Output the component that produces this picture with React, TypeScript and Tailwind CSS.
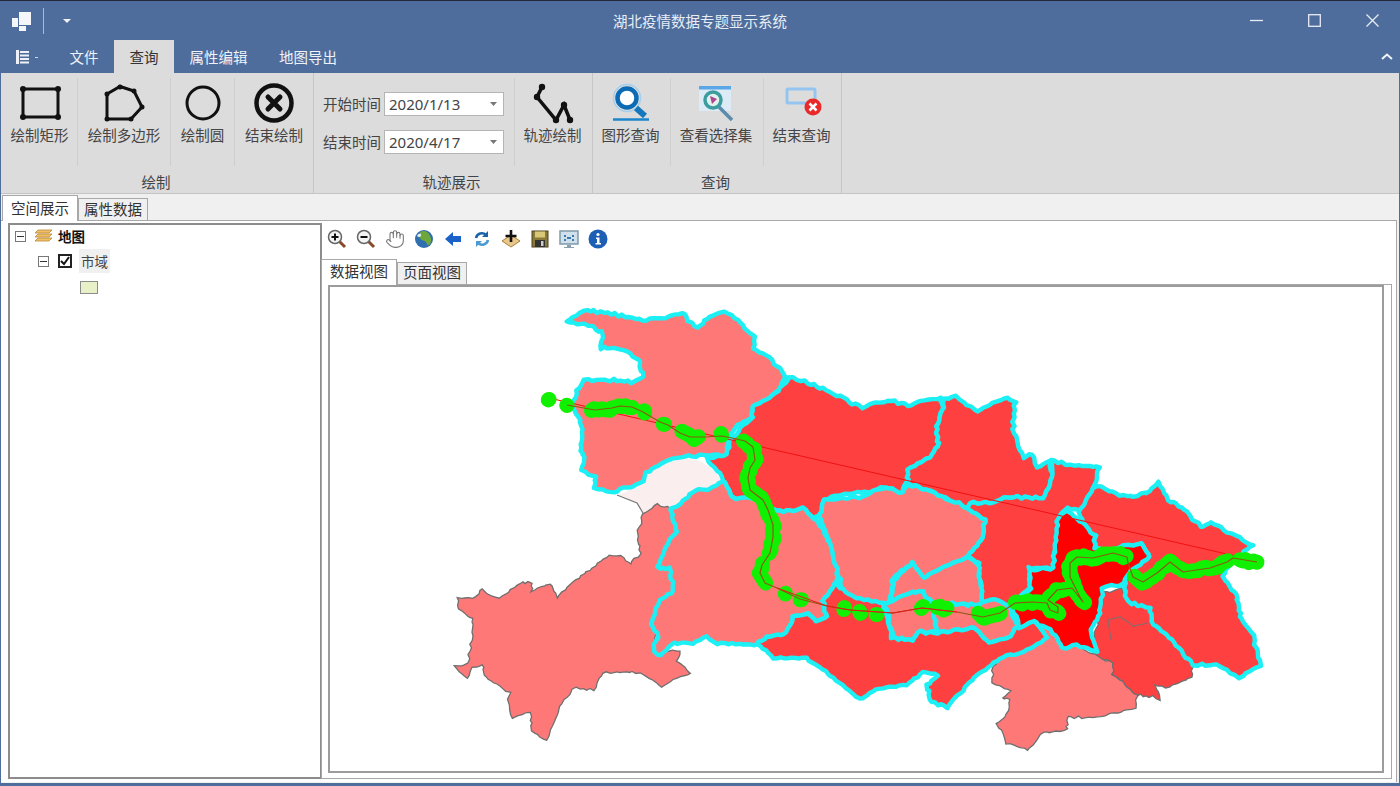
import { Hand } from "lucide-react";

type Pt = number[];

const SHIYAN: Pt[] = [[567,322],[583,310],[607,313],[643,320],[670,317],[682,312],[688,320],[697,327],[710,317],[725,312],[740,323],[755,337],[753,347],[773,360],[787,378],[773,395],[753,407],[753,417],[735,428],[728,440],[727,455],[707,455],[680,457],[660,463],[647,473],[643,482],[627,488],[610,492],[595,488],[595,477],[582,470],[585,457],[580,450],[583,433],[580,420],[572,407],[577,390],[585,380],[613,380],[630,382],[643,377],[640,363],[630,353],[617,348],[600,348],[603,332],[587,325]];
const SHENNONGJIA: Pt[] = [[618,495],[643,482],[647,473],[660,463],[680,458],[697,460],[710,467],[722,480],[710,488],[693,492],[680,507],[670,508],[657,505],[643,513],[637,503]];
const ENSHI: Pt[] = [[458,598],[473,598],[483,588],[492,597],[503,597],[520,582],[532,583],[532,592],[550,583],[557,597],[573,582],[587,572],[610,555],[623,557],[630,565],[640,553],[637,537],[642,517],[643,513],[657,505],[670,508],[673,520],[678,532],[670,540],[657,568],[670,567],[675,590],[662,600],[657,623],[653,653],[680,650],[677,660],[690,673],[673,680],[662,687],[640,673],[627,672],[602,673],[593,690],[573,688],[560,707],[555,723],[547,740],[532,730],[530,713],[525,712],[512,718],[507,700],[510,692],[493,683],[485,677],[482,664],[473,668],[468,678],[455,667],[468,663],[473,633],[472,618],[458,610]];
const YICHANG: Pt[] = [[670,508],[677,507],[693,492],[710,488],[723,480],[733,498],[757,498],[770,508],[783,512],[803,508],[813,517],[822,528],[830,543],[837,570],[837,582],[823,600],[827,617],[817,620],[807,613],[793,617],[787,633],[767,637],[757,645],[717,643],[707,637],[697,643],[673,643],[660,655],[653,653],[658,635],[650,625],[660,600],[673,590],[670,568],[657,568],[670,540],[678,532],[673,520]];
const XIANGYANG: Pt[] = [[790,377],[807,383],[827,390],[850,402],[863,407],[887,400],[907,405],[940,397],[943,410],[937,423],[938,447],[930,458],[908,470],[907,483],[903,493],[887,487],[867,492],[850,493],[823,500],[820,517],[813,517],[803,508],[783,512],[770,508],[757,498],[733,498],[723,480],[707,458],[727,455],[730,440],[752,417],[753,407],[773,395]];
const SUIZHOU: Pt[] = [[943,400],[955,397],[977,412],[1007,398],[1015,403],[1013,430],[1023,457],[1033,455],[1037,467],[1050,462],[1052,477],[1043,498],[1010,497],[990,503],[970,503],[967,508],[920,487],[907,483],[908,470],[930,458],[938,447],[937,423],[943,410]];
const XIAOGAN: Pt[] = [[1052,460],[1070,465],[1100,467],[1093,487],[1083,512],[1067,508],[1058,517],[1060,527],[1055,553],[1053,568],[1028,568],[1032,587],[1007,607],[993,600],[983,603],[978,563],[968,557],[983,537],[985,520],[968,508],[970,503],[990,503],[1010,497],[1043,498],[1052,477]];
const JINGMEN: Pt[] = [[820,517],[823,500],[860,497],[887,487],[903,493],[907,485],[920,487],[968,508],[985,520],[983,537],[968,557],[947,567],[923,577],[913,563],[893,578],[891,597],[885,607],[860,603],[850,600],[842,590],[837,570],[830,543]];
const TIANMEN: Pt[] = [[893,580],[913,563],[923,577],[947,567],[968,557],[978,565],[983,603],[985,605],[950,605],[933,603],[923,592],[910,592],[892,600]];
const QIANJIANG: Pt[] = [[892,600],[910,592],[923,592],[933,603],[937,632],[918,632],[913,640],[893,638],[885,603]];
const XIANTAO: Pt[] = [[933,603],[978,605],[993,598],[1010,607],[1018,627],[1007,638],[990,642],[973,628],[937,633]];
const JINGZHOU: Pt[] = [[787,633],[793,617],[807,613],[817,620],[827,617],[823,600],[837,582],[842,590],[857,598],[883,603],[892,638],[913,640],[918,632],[937,633],[973,628],[990,642],[1007,638],[1018,627],[1033,620],[1047,637],[1020,653],[1000,658],[977,675],[947,707],[930,702],[927,685],[938,675],[923,672],[907,685],[882,688],[867,695],[860,700],[837,680],[807,658],[773,658],[757,645],[767,637]];
const WUHAN: Pt[] = [[1067,512],[1083,523],[1095,537],[1095,548],[1110,550],[1140,543],[1150,557],[1130,570],[1125,583],[1103,588],[1098,620],[1090,630],[1097,652],[1077,645],[1062,648],[1050,630],[1033,620],[1020,627],[1013,607],[1030,590],[1030,570],[1053,568],[1058,517]];
const HUANGGANG: Pt[] = [[1100,487],[1127,497],[1147,493],[1158,483],[1167,500],[1183,507],[1200,527],[1212,523],[1230,533],[1253,545],[1233,560],[1223,577],[1237,597],[1240,617],[1253,633],[1260,665],[1240,678],[1217,665],[1193,665],[1170,637],[1152,625],[1150,608],[1127,602],[1125,588],[1125,573],[1133,570],[1150,557],[1140,543],[1110,550],[1095,548],[1095,537],[1083,523],[1080,513],[1093,487]];
const HUANGSHI: Pt[] = [[1123,588],[1127,602],[1150,608],[1152,625],[1170,637],[1193,665],[1192,677],[1170,688],[1155,685],[1160,700],[1153,697],[1137,695],[1113,675],[1113,663],[1097,655],[1092,643],[1098,620],[1103,593]];
const XIANNING: Pt[] = [[1063,648],[1077,645],[1095,655],[1113,663],[1113,675],[1137,695],[1135,707],[1117,713],[1090,718],[1067,717],[1067,730],[1043,733],[1028,750],[1007,743],[997,725],[1007,713],[1010,700],[1002,698],[1010,692],[992,682],[993,667],[1000,658],[1020,653],[1047,637],[1033,620],[1050,630]];

const TRACK: Pt[] = [[567,405],[595,410],[612,408],[620,406],[632,407],[643,412],[660,422],[668,425],[680,433],[690,437],[705,437],[722,436],[732,438],[745,441],[753,447],[755,460],[750,468],[748,478],[750,490],[763,500],[768,510],[773,525],[773,537],[770,553],[762,565],[760,573],[765,583],[777,588],[800,599],[827,606],[850,610],[893,613],[922,608],[957,612],[983,617],[1000,613],[1015,603],[1033,602],[1047,603],[1050,610],[1058,613],[1058,607],[1048,600],[1057,590],[1072,588],[1083,602],[1080,597],[1070,577],[1070,563],[1077,557],[1093,558],[1113,553],[1127,557],[1128,563],[1133,577],[1143,582],[1157,573],[1170,562],[1183,572],[1210,568],[1227,562],[1233,558],[1257,562]];

const GREEN_RUNS: Pt[][] = [
  [[549,398],[549,399]],
  [[568,405],[568,406]],
  [[592,410],[612,409]],
  [[620,405],[632,408]],
  [[644,412],[644,413]],
  [[663,424],[663,425]],
  [[682,432],[695,438],[697,438]],
  [[722,435],[722,436]],
  [[745,441],[753,447],[755,460],[750,468],[748,478],[750,490],[763,500],[768,510],[773,525],[773,537],[770,553]],
  [[762,565],[760,573],[765,583]],
  [[785,593],[785,594]],
  [[800,599],[800,600]],
  [[843,608],[843,609]],
  [[859,612],[859,613]],
  [[876,614],[876,615]],
  [[922,607],[922,608]],
  [[937,607],[947,609]],
  [[977,614],[985,617],[1000,613]],
  [[1015,603],[1033,602],[1047,603],[1050,610],[1058,613]],
  [[1048,600],[1057,590],[1072,588],[1083,602],[1080,597],[1070,577],[1070,563],[1077,557],[1093,558],[1113,553],[1127,557]],
  [[1133,577],[1143,582],[1157,573],[1170,562],[1183,572],[1210,568],[1227,562]],
  [[1240,560],[1257,562]],
];

// rough border: same displacement at same place, so shared borders stay together
const jag = (pts: Pt[], amp = 1, closed = true) => {
  let d = "";
  const count = closed ? pts.length : pts.length - 1;
  for (let i = 0; i < count; i++) {
    const p = pts[i];
    const q = pts[(i + 1) % pts.length];
    const len = Math.hypot(q[0] - p[0], q[1] - p[1]);
    const n = Math.max(1, Math.ceil(len / 4));
    for (let k = 0; k <= (closed ? n - 1 : n); k++) {
      const x = p[0] + ((q[0] - p[0]) * k) / n;
      const y = p[1] + ((q[1] - p[1]) * k) / n;
      const dx = amp * (Math.sin(x * 1.7 + y * 0.9) + 0.6 * Math.sin(x * 0.6 - y * 2.1));
      const dy = amp * (Math.cos(x * 1.1 - y * 1.5) + 0.6 * Math.sin(x * 2.3 + y * 0.7));
      d += `${d ? "L" : "M"}${(x + dx).toFixed(1)} ${(y + dy).toFixed(1)}`;
    }
  }
  return closed ? d + "Z" : d;
};

const line = (pts: Pt[]) => pts.map((p, i) => `${i ? "L" : "M"}${p[0]} ${p[1]}`).join("");

const cyanRegions: [Pt[], string][] = [
  [SHIYAN, "#ff7878"],
  [XIANGYANG, "#ff4040"],
  [SUIZHOU, "#ff4040"],
  [XIAOGAN, "#ff4040"],
  [YICHANG, "#ff7878"],
  [JINGMEN, "#ff7878"],
  [TIANMEN, "#ff7878"],
  [QIANJIANG, "#ff7878"],
  [XIANTAO, "#ff7878"],
  [JINGZHOU, "#ff4040"],
  [HUANGGANG, "#ff4040"],
  [WUHAN, "#ff0000"],
];

const MapView = () => (
  <svg viewBox="330 287 1052 484" className="block w-[1052px] h-[484px]">
    <path d={jag(SHENNONGJIA, 0.5)} fill="#fbeeee" />
    <path d={line([[617,495],[637,503],[643,513]])} fill="none" stroke="#777" strokeWidth="1.2" />
    <path d={jag(ENSHI, 0.9)} fill="#ff7878" stroke="#6f6f6f" strokeWidth="1.3" />
    <path d={jag(XIANNING, 0.9)} fill="#ff7878" stroke="#6f6f6f" strokeWidth="1.3" />
    <path d={jag(HUANGSHI, 0.9)} fill="#ff4040" stroke="#6f6f6f" strokeWidth="1.3" />
    <path d={line([[1111,640],[1108,620],[1120,617],[1128,622],[1133,626],[1148,623]])} fill="none" stroke="#8a6a6a" strokeWidth="1.2" />
    {cyanRegions.map(([pts, fill], i) => (
      <path key={i} d={jag(pts, 0.9)} fill={fill} stroke="#1cf0f4" strokeWidth="4.4" strokeLinejoin="round" />
    ))}
    <path d={line([[549,398],[1257,561]])} fill="none" stroke="#f01010" strokeWidth="1" />
    {GREEN_RUNS.map((run, i) => (
      <path key={i} d={jag(run, 1, false)} fill="none" stroke="#10f000" strokeWidth="15" strokeLinecap="round" strokeLinejoin="round" />
    ))}
    <path d={line(TRACK)} fill="none" stroke="#8a5a10" strokeWidth="1.2" strokeLinejoin="round" />
    <path d={line([[777,588],[827,606],[850,610],[893,613],[922,608],[957,612]])} fill="none" stroke="#e81818" strokeWidth="1" />
  </svg>
);

const RibbonButton = ({ w, label, children }: { w: string; label: string; children: React.ReactNode }) => (
  <div className={`${w} h-[88px] border-r border-[#cfcfcf] flex flex-col items-center`}>
    <div className="h-[50px] flex items-center justify-center">{children}</div>
    <span className="-mt-[3px] text-[14.5px] leading-5 text-[#444] whitespace-nowrap">{label}</span>
  </div>
);

const DateField = ({ label, value }: { label: string; value: string }) => (
  <div className="flex items-center h-[24px]">
    <span className="w-[61px] text-[14.5px] text-[#444] whitespace-nowrap">{label}</span>
    <div className="w-[120px] h-[24px] bg-white border border-[#b5b5b5] flex items-center justify-between pl-[4px] pr-[6px]">
      <span className="text-[15px] text-[#444] font-['Noto_Sans',sans-serif]">{value}</span>
      <svg width="7" height="4" viewBox="0 0 7 4"><path d="M0 0h7L3.500 4z" fill="#777" /></svg>
    </div>
  </div>
);

const Group = ({ w, label, children }: { w: string; label: string; children: React.ReactNode }) => (
  <div className={`${w} h-[120px] border-r border-[#c6c6c6] flex flex-col`}>
    <div className="flex h-[99px] pt-[5px]">{children}</div>
    <div className="flex-1 text-center text-[14.5px] leading-5 text-[#444] pr-[3px]">{label}</div>
  </div>
);

const RectIcon = () => (
  <svg width="42" height="38" viewBox="0 0 42 38">
    <rect x="4" y="5" width="35" height="28" fill="none" stroke="#111" strokeWidth="3" />
    {[[4,5],[39,5],[4,33],[39,33]].map(([x, y]) => <circle key={x * 10 + y} cx={x} cy={y} r="3" fill="#111" />)}
  </svg>
);

const PolyIcon = () => (
  <svg width="42" height="40" viewBox="0 0 42 40">
    <path d="M4 11L17 3.500 31 8 39 24 28 36H4Z" fill="none" stroke="#111" strokeWidth="3" />
    {[[4,11],[17,4],[31,8],[39,24],[28,36],[4,36]].map(([x, y]) => <circle key={x} cx={x} cy={y} r="2.500" fill="#111" />)}
  </svg>
);

const EndDrawIcon = () => (
  <svg width="40" height="40" viewBox="0 0 40 40">
    <circle cx="20" cy="20" r="17.500" fill="none" stroke="#111" strokeWidth="4.500" />
    <path d="M14 14L26 26M26 14L14 26" stroke="#111" strokeWidth="5" strokeLinecap="round" />
  </svg>
);

const TrackIcon = () => (
  <svg width="42" height="42" viewBox="0 0 42 42">
    <path d="M10 5L5 15 24 38 32 23 38 38" fill="none" stroke="#111" strokeWidth="3.500" />
    {[[10,5],[5,15],[24,38],[32,23],[38,38]].map(([x, y]) => <circle key={x} cx={x} cy={y} r="3.200" fill="#111" />)}
  </svg>
);

const ShapeQueryIcon = () => (
  <svg width="40" height="40" viewBox="0 0 40 40">
    <circle cx="16" cy="15" r="13.500" fill="none" stroke="#a5cfec" strokeWidth="1.500" />
    <circle cx="16" cy="15" r="9.500" fill="#fff" stroke="#0b6cb5" strokeWidth="4.500" />
    <path d="M25 25L34 33" stroke="#1578bd" strokeWidth="6" />
    <path d="M2 36.500H38" stroke="#1b86cc" strokeWidth="2.500" />
  </svg>
);

const SelectionIcon = () => (
  <svg width="38" height="40" viewBox="0 0 38 40">
    <rect x="2" y="3" width="32" height="25" fill="#dcebf6" />
    <rect x="2" y="3" width="32" height="3.500" fill="#5aa6e6" />
    <circle cx="16" cy="17" r="8" fill="#dff2ee" stroke="#3d9c9e" strokeWidth="3.500" />
    <path d="M13 13l7 3-5 5z" fill="#b0458c" />
    <path d="M22 24L35 37" stroke="#5a8cad" strokeWidth="3.500" />
  </svg>
);

const EndQueryIcon = () => (
  <svg width="40" height="38" viewBox="0 0 40 38">
    <rect x="5" y="5" width="28" height="14" rx="1" fill="none" stroke="#93c5f0" strokeWidth="3" />
    <circle cx="31" cy="23" r="8.500" fill="#ea2a2a" />
    <path d="M27.500 19.500L34.500 26.500M34.500 19.500L27.500 26.500" stroke="#fff" strokeWidth="2.500" />
  </svg>
);

const Lens = ({ plus }: { plus?: boolean }) => (
  <svg width="20" height="20" viewBox="0 0 20 20">
    <path d="M12 12L18 18" stroke="#8a4a2a" strokeWidth="3" />
    <circle cx="8" cy="8" r="6.500" fill="#f4f4f4" stroke="#666" strokeWidth="1.500" />
    <path d={plus ? "M4.500 8h7M8 4.500v7" : "M4.500 8h7"} stroke="#111" strokeWidth="2" />
  </svg>
);

const ToolIcons = () => (
  <div className="flex items-center gap-[9px] h-[34px] pl-[6px] pb-[2px]">
    <Lens plus />
    <Lens />
    <Hand size={20} strokeWidth={1.3} className="text-[#777]" />
    <svg width="20" height="20" viewBox="0 0 20 20">
      <circle cx="10" cy="10" r="9" fill="#2f6fb0" />
      <path d="M6 3c3-2 7-1 9 2s3 7 1 10-3 0-4-2-5-1-6-4 1-3 0-6z" fill="#6fa83a" />
      <path d="M3 7c2-3 4-3 4-1S5 9 3 7z" fill="#e8f0f0" />
    </svg>
    <svg width="20" height="20" viewBox="0 0 20 20"><path d="M2 10l8-7v4h8v6h-8v4z" fill="#1a62c8" /></svg>
    <svg width="20" height="20" viewBox="0 0 20 20" fill="none">
      <path d="M4 9a6 6 0 0 1 10-3" stroke="#1c64a8" strokeWidth="2.600" />
      <path d="M16 2v6h-6z" fill="#1c64a8" />
      <path d="M16 11a6 6 0 0 1-10 3" stroke="#4a9ad4" strokeWidth="2.600" />
      <path d="M4 18v-6h6z" fill="#4a9ad4" />
    </svg>
    <svg width="20" height="20" viewBox="0 0 20 20">
      <path d="M10 6l9 6-9 6-9-6z" fill="#e8c88a" stroke="#a8803a" />
      <path d="M10 1v12M4.500 7h11" stroke="#111" strokeWidth="2.600" />
    </svg>
    <svg width="20" height="20" viewBox="0 0 20 20">
      <rect x="2" y="2" width="16" height="16" fill="#8a7a3a" stroke="#4a4020" />
      <rect x="5" y="2.500" width="10" height="6" fill="#d8c878" />
      <rect x="5" y="11" width="10" height="7" fill="#333" />
      <rect x="11" y="12" width="2.500" height="5" fill="#ccc" />
    </svg>
    <svg width="20" height="20" viewBox="0 0 20 20">
      <rect x="1" y="2" width="18" height="13" fill="#cfe0ea" stroke="#7f9aa8" strokeWidth="1.500" />
      <path d="M5 6h2v2H5zM13 6h2v2h-2zM5 10h2v2H5zM13 10h2v2h-2zM8 8h4v2H8z" fill="#3a7ab0" />
      <path d="M8 16h4v2h3v1H5v-1h3z" fill="#8aa0ac" />
    </svg>
    <svg width="20" height="20" viewBox="0 0 20 20">
      <circle cx="10" cy="10" r="9.500" fill="#1c5fb4" />
      <circle cx="10" cy="5.500" r="1.600" fill="#fff" />
      <path d="M8 8.500h3.500V14H13v1.500H7.500V14H9V10H8z" fill="#fff" />
    </svg>
  </div>
);

const tabBase = "border border-b-0 border-[#a8a8a8] text-[14.5px] text-[#333] text-center";
const tabIdle = `${tabBase} h-[22px] bg-[#f0f0f0] leading-[20px]`;
const tabOn = `${tabBase} h-[26px] bg-white leading-[24px] -mb-px relative`;
const mapTabIdle = `${tabBase} h-[22px] bg-[#f0f0f0] leading-[18px]`;
const mapTabOn = `${tabBase} h-[26px] bg-white leading-[22px] -mb-px relative`;

export default function App() {
  return (
    <div className="w-[1400px] h-[786px] flex flex-col overflow-hidden bg-[#4e6d9c] border-t border-[#23283a] font-['Noto_Sans_CJK_SC','Noto_Sans',sans-serif]">
      {/* title bar */}
      <div className="h-[39px] grid grid-cols-[1fr_auto_1fr] items-center text-white">
        <div className="flex items-center pl-[12px]">
          <svg width="20" height="20" viewBox="0 0 20 20" fill="#f4f6fa">
            <rect x="7" y="1" width="12" height="13" />
            <rect x="0" y="7" width="6" height="9" />
            <rect x="7" y="15" width="7" height="5" />
          </svg>
          <div className="w-px h-[26px] bg-[#a9bad3] ml-[11px]" />
          <svg width="8" height="4" viewBox="0 0 8 4" className="ml-[19px]"><path d="M0 0h8L4 4z" fill="#f0f3f8" /></svg>
        </div>
        <span className="text-[14.5px] text-[#e8edf5]">湖北疫情数据专题显示系统</span>
        <div className="flex justify-end items-center pr-[21px] gap-[45px]">
          <svg width="13" height="13" viewBox="0 0 13 13"><path d="M0 6.500h13" stroke="#e8edf5" strokeWidth="1.300" /></svg>
          <svg width="13" height="13" viewBox="0 0 13 13"><rect x="0.700" y="0.700" width="11.600" height="11.600" fill="none" stroke="#e8edf5" strokeWidth="1.300" /></svg>
          <svg width="13" height="13" viewBox="0 0 13 13"><path d="M0.500 0.500l12 12M12.500 0.500l-12 12" stroke="#e8edf5" strokeWidth="1.300" /></svg>
        </div>
      </div>

      {/* ribbon tabs */}
      <div className="h-[33px] flex items-stretch text-[14.5px] text-[#eef2f8]">
        <div className="w-[54px] flex items-center pl-[16px] gap-[3px]">
          <svg width="16" height="14" viewBox="0 0 16 14" fill="#eef2f8">
            <rect x="0" y="0" width="3" height="14" />
            <path d="M4 1h9v2H4zM4 4.500h9v2H4zM4 8h9v2H4zM4 11.500h9v2H4z" />
          </svg>
          <span className="w-[3px] h-px bg-[#cdd7e6] mt-[2px]" />
        </div>
        <div className="w-[60px] flex items-center justify-center">文件</div>
        <div className="w-[60px] flex items-center justify-center bg-[#dcdcdc] text-[#333]">查询</div>
        <div className="w-[89px] flex items-center justify-center">属性编辑</div>
        <div className="w-[90px] flex items-center justify-center">地图导出</div>
        <div className="flex-1 flex justify-end items-center pr-[7px]">
          <svg width="12" height="7" viewBox="0 0 12 7"><path d="M1 6l5-4.500L11 6" fill="none" stroke="#f0f3f8" strokeWidth="2" /></svg>
        </div>
      </div>

      {/* window body */}
      <div className="h-[710px] mx-[1px] bg-[#f0f0f0] flex flex-col">
        <div className="h-[120px] bg-[#dcdcdc] border-b border-[#c4c4c4] flex pl-[1px] box-content -mb-px">
          <Group w="w-[312px]" label="绘制">
            <RibbonButton w="w-[76px]" label="绘制矩形"><RectIcon /></RibbonButton>
            <RibbonButton w="w-[93px]" label="绘制多边形"><PolyIcon /></RibbonButton>
            <RibbonButton w="w-[64px]" label="绘制圆">
              <svg width="38" height="38" viewBox="0 0 38 38"><circle cx="19" cy="19" r="16" fill="none" stroke="#111" strokeWidth="3" /></svg>
            </RibbonButton>
            <div className="w-[78px] h-[88px] flex flex-col items-center">
              <div className="h-[50px] flex items-center justify-center"><EndDrawIcon /></div>
              <span className="-mt-[3px] text-[14.5px] leading-5 text-[#444] whitespace-nowrap">结束绘制</span>
            </div>
          </Group>
          <Group w="w-[279px]" label="轨迹展示">
            <div className="w-[201px] h-[88px] border-r border-[#cfcfcf] pl-[9px] pt-[14px] flex flex-col gap-[14px]">
              <DateField label="开始时间" value="2020/1/13" />
              <DateField label="结束时间" value="2020/4/17" />
            </div>
            <div className="flex-1 h-[88px] flex flex-col items-center pr-[2px]">
              <div className="h-[50px] flex items-center justify-center"><TrackIcon /></div>
              <span className="-mt-[3px] text-[14.5px] leading-5 text-[#444] whitespace-nowrap">轨迹绘制</span>
            </div>
          </Group>
          <Group w="w-[249px]" label="查询">
            <RibbonButton w="w-[78px] pr-[2px]" label="图形查询"><ShapeQueryIcon /></RibbonButton>
            <RibbonButton w="w-[93px] pr-[2px]" label="查看选择集"><SelectionIcon /></RibbonButton>
            <div className="flex-1 h-[88px] flex flex-col items-center pr-[2px]">
              <div className="h-[50px] flex items-center justify-center"><EndQueryIcon /></div>
              <span className="-mt-[3px] text-[14.5px] leading-5 text-[#444] whitespace-nowrap">结束查询</span>
            </div>
          </Group>
        </div>

        {/* page tabs */}
        <div className="h-[27px] flex items-end pl-[1px] pt-px">
          <div className={`${tabOn} w-[76px]`}>空间展示</div>
          <div className={`${tabIdle} w-[70px]`}>属性数据</div>
        </div>

        <div className="h-[562px] bg-white border-t border-r border-[#a8a8a8] mr-[2px] flex pt-[2px] pl-[7px] pb-[2px] pr-[5px]">
          {/* layer tree */}
          <div className="w-[314px] shrink-0 h-[556px] border-2 border-[#8c8c8c] bg-white">
            <div className="flex items-center h-[22px] pl-[5px]">
              <div className="w-[11px] h-[11px] border border-[#777] flex items-center justify-center"><span className="w-[7px] h-px bg-[#333]" /></div>
              <svg width="20" height="17" viewBox="0 0 20 17" className="ml-[7px]">
                <path d="M5 2h14l-3 3H2zM5 6h14l-3 3H2zM5 10h14l-3 3H2z" fill="#f0c068" stroke="#b88838" strokeWidth="0.800" />
              </svg>
              <span className="ml-[5px] text-[13.5px] font-bold text-[#111]">地图</span>
            </div>
            <div className="flex items-center h-[24px] pl-[28px] mt-[2px]">
              <div className="w-[11px] h-[11px] border border-[#777] flex items-center justify-center"><span className="w-[7px] h-px bg-[#333]" /></div>
              <div className="ml-[9px] w-[14px] h-[14px] border-2 border-[#222] flex items-center justify-center">
                <svg width="10" height="10" viewBox="0 0 10 10"><path d="M1 5l3 3 5-7" fill="none" stroke="#111" strokeWidth="2" /></svg>
              </div>
              <span className="ml-[7px] px-[2px] h-[24px] leading-[24px] bg-[#f0f0f0] text-[13.5px] text-[#444]">市域</span>
            </div>
            <div className="pl-[70px] mt-[8px]">
              <div className="w-[18px] h-[13px] bg-[#e8f0c8] border border-[#8c8c8c]" />
            </div>
          </div>

          {/* map side */}
          <div className="flex-1 flex flex-col -ml-px">
            <ToolIcons />
            <div className="h-[27px] flex items-end">
              <div className={`${mapTabOn} w-[76px]`}>数据视图</div>
              <div className={`${mapTabIdle} w-[70px]`}>页面视图</div>
            </div>
            <div className="w-[1071px] h-[495px] border border-[#a8a8a8] pl-[6px] pr-[6px]">
              <div className="w-[1056px] h-[488px] border-2 border-[#9c9c9c] bg-white">
                <MapView />
              </div>
            </div>
          </div>
        </div>
      </div>
    </div>
  );
}
